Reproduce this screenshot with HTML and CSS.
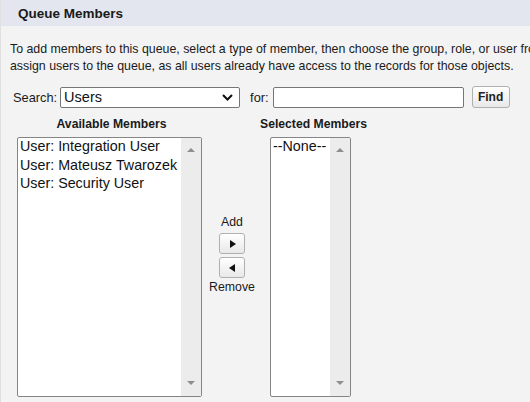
FILE: index.html
```html
<!DOCTYPE html>
<html>
<head>
<meta charset="utf-8">
<link rel="stylesheet" href="styles.css">
</head>
<body>
<div class="panel">
  <div class="hdr">Queue Members</div>
  <p class="intro">To add members to this queue, select a type of member, then choose the group, role, or user from the list and click Add. You do not need to<br>assign users to the queue, as all users already have access to the records for those objects.</p>
  <div class="search-row">
    <span class="lbl">Search:</span>
    <div class="select">
      <span>Users</span>
      <svg class="chev" width="11" height="7" viewBox="0 0 11 7"><path d="M1 1 L5.5 5.5 L10 1" fill="none" stroke="#111" stroke-width="2"/></svg>
    </div>
    <span class="lbl for">for:</span>
    <div class="input"></div>
    <button class="btn find">Find</button>
  </div>
  <div class="members">
    <div class="col left">
      <div class="colhead">Available Members</div>
      <div class="listbox wide">
        <div class="items">
          <div>User: Integration User</div>
          <div>User: Mateusz Twarozek</div>
          <div>User: Security User</div>
        </div>
        <div class="sbar"><span class="up"></span><span class="down"></span></div>
      </div>
    </div>
    <div class="mid">
      <div class="midlbl">Add</div>
      <button class="btn arrow"><span class="tri-r"></span></button>
      <button class="btn arrow"><span class="tri-l"></span></button>
      <div class="midlbl">Remove</div>
    </div>
    <div class="col right">
      <div class="colhead">Selected Members</div>
      <div class="listbox narrow">
        <div class="items">
          <div>--None--</div>
        </div>
        <div class="sbar"><span class="up"></span><span class="down"></span></div>
      </div>
    </div>
  </div>
</div>
</body>
</html>
```
FILE: styles.css
```css
html, body {
  margin: 0;
  padding: 0;
}
body {
  width: 530px;
  height: 402px;
  overflow: hidden;
  background: #f3f3f3;
  font-family: "Liberation Sans", Arial, sans-serif;
  color: #111;
}
.panel {
  border-left: 1px solid #e0e0e0;
  height: 402px;
  box-sizing: border-box;
}
.hdr {
  height: 26px;
  background: #e3e6ee;
  display: flex;
  align-items: center;
  padding-left: 17px;
  font-weight: bold;
  font-size: 13.5px;
  color: #1a1a1a;
}
.intro {
  margin: 15px 0 0 9px;
  font-size: 12.36px;
  line-height: 17px;
  white-space: nowrap;
  overflow: hidden;
  color: #1a1a1a;
}
.search-row {
  display: flex;
  align-items: center;
  margin: 11px 0 0 12px;
  height: 22px;
}
.lbl {
  font-size: 12.8px;
  color: #1a1a1a;
}
.select {
  margin-left: 3px;
  width: 180px;
  height: 21px;
  box-sizing: border-box;
  border: 1px solid #767676;
  border-radius: 2px;
  background: #fff;
  display: flex;
  align-items: center;
  justify-content: space-between;
  padding: 0 6px 0 3px;
  font-size: 14.5px;
}
.chev {
  display: block;
}
.for {
  margin-left: 10px;
}
.input {
  margin-left: 4px;
  width: 191px;
  height: 21px;
  box-sizing: border-box;
  border: 1px solid #767676;
  border-radius: 2px;
  background: #fff;
}
.btn {
  box-sizing: border-box;
  border: 1px solid #b0b0b0;
  border-radius: 3px;
  background: linear-gradient(#ffffff, #e8e8e8);
  font-family: "Liberation Sans", Arial, sans-serif;
  padding: 0;
  margin: 0;
}
.find {
  margin-left: 8px;
  width: 38px;
  height: 22px;
  font-weight: bold;
  font-size: 12px;
  color: #222;
}
.members {
  display: flex;
  margin-top: 9px;
}
.col {
  display: flex;
  flex-direction: column;
}
.left {
  margin-left: 16px;
  width: 185px;
}
.colhead {
  font-weight: bold;
  font-size: 12.2px;
  line-height: 14px;
  height: 14px;
  margin-bottom: 6px;
  white-space: nowrap;
  color: #1a1a1a;
}
.left .colhead {
  text-align: center;
  padding-left: 4px;
}
.right .colhead {
  margin-left: -10px;
}
.listbox {
  height: 260px;
  box-sizing: border-box;
  border: 1px solid #858585;
  border-radius: 2px;
  background: #fff;
  display: flex;
}
.wide {
  width: 185px;
}
.narrow {
  width: 81px;
}
.items {
  flex: 1;
  font-size: 14.3px;
  line-height: 18.5px;
  padding-left: 2px;
  white-space: nowrap;
  overflow: hidden;
  margin-top: -1px;
}
.sbar {
  width: 20px;
  background: #ececec;
  display: flex;
  flex-direction: column;
  justify-content: space-between;
  align-items: center;
  padding: 10px 0 11px;
}
.up {
  width: 0;
  height: 0;
  border-left: 4px solid transparent;
  border-right: 4px solid transparent;
  border-bottom: 4px solid #8e8e8e;
}
.down {
  width: 0;
  height: 0;
  border-left: 4px solid transparent;
  border-right: 4px solid transparent;
  border-top: 4px solid #8e8e8e;
}
.mid {
  width: 68px;
  box-sizing: border-box;
  padding-right: 8px;
  display: flex;
  flex-direction: column;
  align-items: center;
  padding-top: 98px;
}
.midlbl {
  font-size: 12.3px;
  line-height: 14px;
  color: #1a1a1a;
}
.arrow {
  width: 26px;
  height: 21px;
  display: flex;
  align-items: center;
  justify-content: center;
  margin-top: 3px;
}
.arrow + .midlbl {
  margin-top: 2px;
}
.midlbl + .arrow {
  margin-top: 4px;
}
.tri-r {
  width: 0;
  height: 0;
  border-top: 4.5px solid transparent;
  border-bottom: 4.5px solid transparent;
  border-left: 6px solid #111;
  margin-left: 1px;
}
.tri-l {
  width: 0;
  height: 0;
  border-top: 4.5px solid transparent;
  border-bottom: 4.5px solid transparent;
  border-right: 6px solid #111;
  margin-right: 1px;
}
```
